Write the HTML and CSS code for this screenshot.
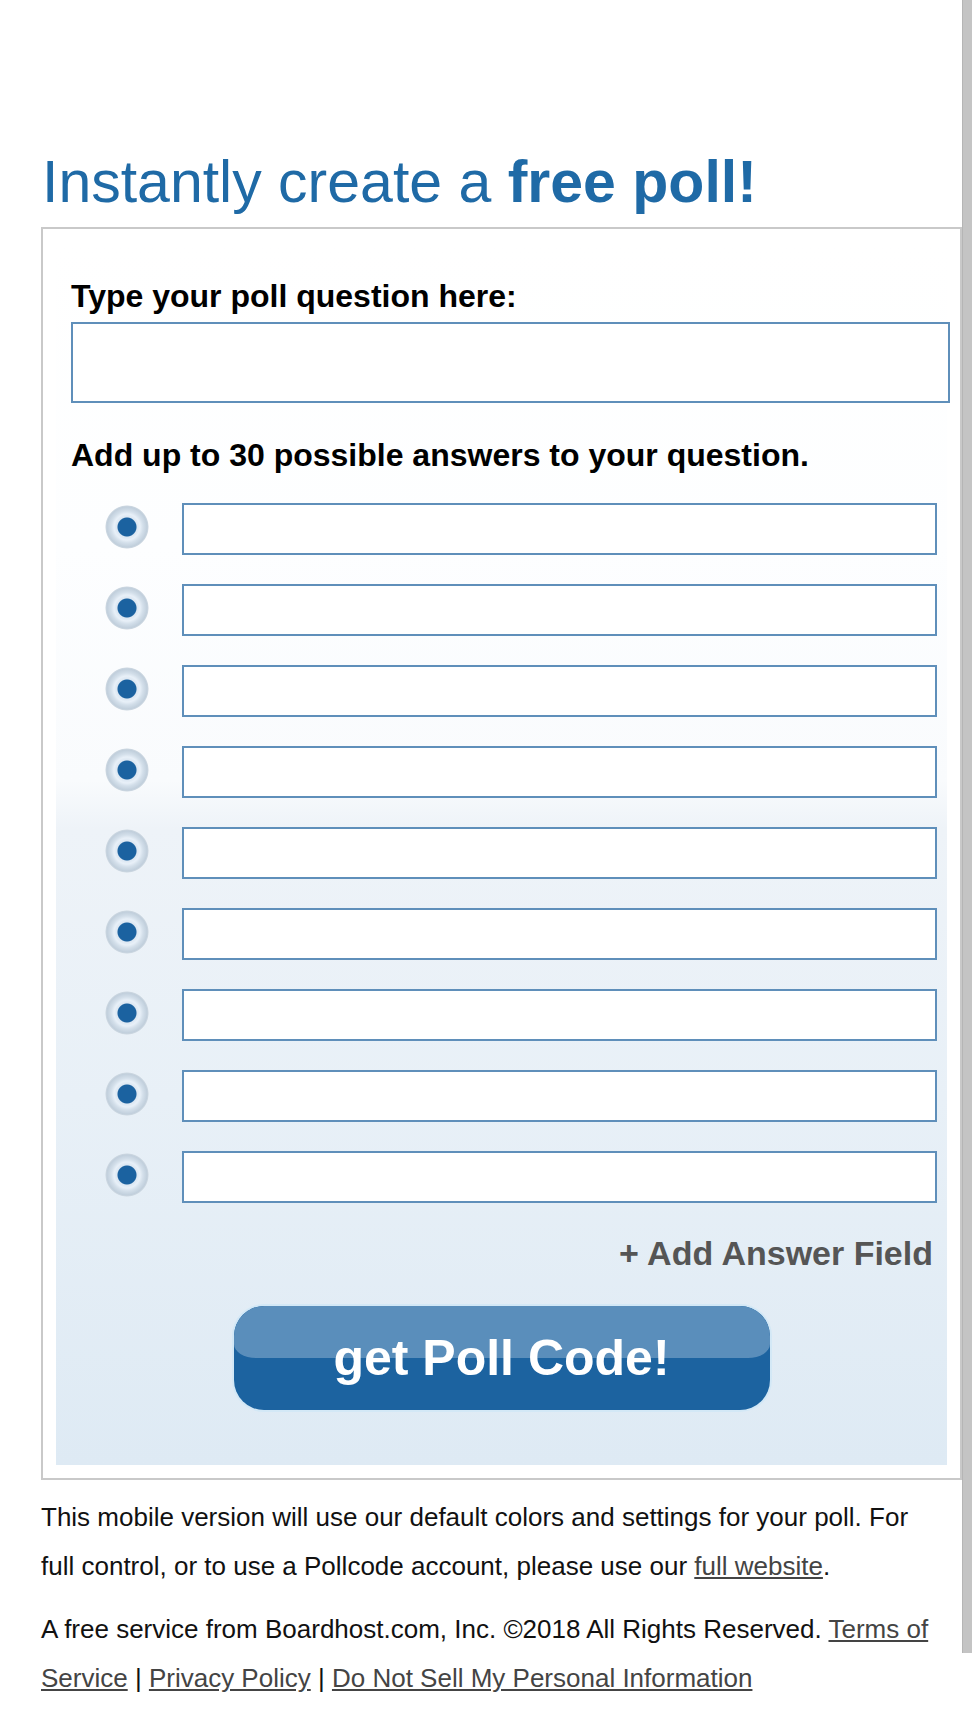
FILE: index.html
```html
<!DOCTYPE html>
<html lang="en">
<head>
    <meta charset="UTF-8">
    <meta name="viewport" content="width=device-width, initial-scale=1.0">
    <title>Pollcode - Instantly create a free poll</title>
    <link rel="stylesheet" href="styles.css">
</head>
<body>
    <div class="page">
        <main class="content">
            <h1 class="title">Instantly create a <strong>free poll!</strong></h1>

            <form class="poll-box" onsubmit="return false;">
                <div class="poll-panel">
                    <label class="field-label" for="question">Type your poll question here:</label>
                    <input type="text" id="question" class="question-input">

                    <p class="field-label answers-label">Add up to 30 possible answers to your question.</p>
                    <ul class="answers">
                        <li class="answer-row"><span class="radio"></span><input type="text" class="answer-input"></li>
                        <li class="answer-row"><span class="radio"></span><input type="text" class="answer-input"></li>
                        <li class="answer-row"><span class="radio"></span><input type="text" class="answer-input"></li>
                        <li class="answer-row"><span class="radio"></span><input type="text" class="answer-input"></li>
                        <li class="answer-row"><span class="radio"></span><input type="text" class="answer-input"></li>
                        <li class="answer-row"><span class="radio"></span><input type="text" class="answer-input"></li>
                        <li class="answer-row"><span class="radio"></span><input type="text" class="answer-input"></li>
                        <li class="answer-row"><span class="radio"></span><input type="text" class="answer-input"></li>
                        <li class="answer-row"><span class="radio"></span><input type="text" class="answer-input"></li>
                    </ul>

                    <div class="add-field"><a href="#">+ Add Answer Field</a></div>

                    <div class="submit-row">
                        <button type="submit" class="get-code"><span>get Poll Code!</span></button>
                    </div>
                </div>
            </form>

            <p class="note">This mobile version will use our default colors and settings for your poll. For full control, or to use a Pollcode account, please use our <a href="#">full website</a>.</p>
            <p class="note">A free service from Boardhost.com, Inc. &copy;2018 All Rights Reserved. <a href="#">Terms of Service</a> | <a href="#">Privacy Policy</a> | <a href="#">Do Not Sell My Personal Information</a></p>
        </main>
        <div class="scrollbar"><div class="thumb"></div></div>
    </div>
</body>
</html>
```

FILE: styles.css
```css
body {
    font-family: "Liberation Sans", Arial, sans-serif;
    margin: 0;
    padding: 0;
    background-color: #fff;
    color: #000;
}
.page {
    display: flex;
    min-height: 1728px;
}
.content {
    flex: 1;
    padding: 148px 0 0 41px;
}
.title {
    margin: 0 0 11px 1px;
    font-size: 59px;
    line-height: 68px;
    font-weight: normal;
    color: #1f6aa6;
}
.title strong {
    font-weight: bold;
}
.poll-box {
    margin: 0;
    border: 2px solid #c9c9c9;
    padding: 13px;
}
.poll-panel {
    padding: 36px 0 55px 15px;
    background: linear-gradient(to bottom, #ffffff 0%, #fdfeff 25%, #f9fbfd 44%, #eef3f8 48%, #e8f0f7 70%, #deeaf4 100%);
}
.field-label {
    display: block;
    margin: 0;
    font-size: 32px;
    line-height: 37px;
    font-weight: bold;
}
.question-input {
    display: block;
    box-sizing: border-box;
    width: calc(100% + 3px);
    height: 81px;
    margin: 7px 0 0 0;
    border: 2px solid #5f8fba;
    background: #fff;
    font-size: 26px;
}
.answers-label {
    margin-top: 34px;
}
.answers {
    list-style-type: none;
    margin: 29px 0 0 0;
    padding: 0;
    display: flex;
    flex-direction: column;
    gap: 29px;
}
.answer-row {
    display: flex;
    align-items: center;
    padding-right: 10px;
}
.radio {
    flex: none;
    width: 44px;
    height: 44px;
    margin: -4px 33px 0 34px;
    border-radius: 50%;
    background: radial-gradient(circle, #1b62a0 0, #1b62a0 9px, #dce7f2 10px, #e8f0f8 13px, #d3dfea 16px, #c1cfdc 20px, #cbd6e0 21px, transparent 22px);
}
.answer-input {
    flex: 1;
    box-sizing: border-box;
    height: 52px;
    border: 2px solid #5f8fba;
    background: #fff;
    font-size: 24px;
}
.add-field {
    margin: 31px 14px 0 0;
    text-align: right;
    font-size: 34px;
    line-height: 39px;
    font-weight: bold;
}
.add-field a {
    color: #555;
    text-decoration: none;
}
.submit-row {
    margin: 33px 0 0 -15px;
    text-align: center;
}
.get-code {
    position: relative;
    width: 536px;
    height: 104px;
    padding: 0;
    border: none;
    border-radius: 30px;
    background-color: #1c63a0;
    box-shadow: 0 0 0 2px #d3e8f6;
    color: #fff;
    font-family: "Liberation Sans", Arial, sans-serif;
    font-size: 50px;
    font-weight: bold;
    cursor: pointer;
    overflow: hidden;
}
.get-code::before {
    content: "";
    position: absolute;
    top: 0;
    left: 0;
    right: 0;
    height: 52px;
    background-color: #5a8ebb;
    border-radius: 30px 30px 22px 22px / 30px 30px 14px 14px;
}
.get-code span {
    position: relative;
}
.note {
    margin: 13px 24px 0 0;
    font-size: 26px;
    line-height: 49px;
    color: #111;
}
.note + .note {
    margin-top: 14px;
}
.note a {
    color: #444;
}
.scrollbar {
    flex: none;
    width: 10px;
    background-color: #fff;
}
.thumb {
    height: 1653px;
    background-color: #c4c4c4;
    border-left: 1px solid #b5b5b5;
}
```
